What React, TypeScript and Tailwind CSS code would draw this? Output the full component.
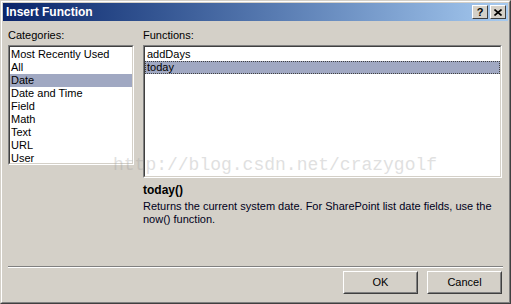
import React from "react";

const font = { fontFamily: '"Liberation Sans", Tahoma, sans-serif' };

function Sunken({ className, children }: { className?: string; children?: React.ReactNode }) {
  return (
    <div className={"border border-t-[#808080] border-l-[#808080] border-r-white border-b-white " + (className ?? "")}>
      <div className="h-full border border-t-[#404040] border-l-[#404040] border-r-[#d4d0c8] border-b-[#d4d0c8] bg-white pt-px">
        {children}
      </div>
    </div>
  );
}

function Btn({ label }: { label: string }) {
  return (
    <div className="w-[75px] h-[23px] border border-t-white border-l-white border-r-[#404040] border-b-[#404040]">
      <div className="h-full border border-t-[#d4d0c8] border-l-[#d4d0c8] border-r-[#808080] border-b-[#808080] flex items-center justify-center text-[11px] text-black">
        {label}
      </div>
    </div>
  );
}

function TitleBtn({ children }: { children: React.ReactNode }) {
  return (
    <div className="w-[16px] h-[14px] bg-[#d4d0c8] border border-t-white border-l-white border-r-[#404040] border-b-[#404040] flex items-center justify-center">
      {children}
    </div>
  );
}

export default function App() {
  const cats = ["Most Recently Used", "All", "Date", "Date and Time", "Field", "Math", "Text", "URL", "User"];
  const funcs = ["addDays", "today"];
  return (
    <div style={font} className="w-[511px] h-[304px] bg-[#d4d0c8] border border-t-[#d4d0c8] border-l-[#d4d0c8] border-r-[#404040] border-b-[#404040] relative overflow-hidden">
      <div className="h-full border border-t-white border-l-white border-r-[#808080] border-b-[#808080] p-px flex flex-col">
        <div className="h-[18px] flex items-center justify-between pl-[3px] pr-[2px] bg-gradient-to-r from-[#0a246a] to-[#a6caf0]">
          <span className="text-white font-bold text-[12px] leading-none">Insert Function</span>
          <div className="flex gap-[2px]">
            <TitleBtn>
              <span className="text-black font-bold text-[11px] leading-none">?</span>
            </TitleBtn>
            <TitleBtn>
              <svg width="8" height="7" viewBox="0 0 8 7">
                <path d="M0.5 0.5 L7.5 6.5 M7.5 0.5 L0.5 6.5" stroke="#000" strokeWidth="1.6" />
              </svg>
            </TitleBtn>
          </div>
        </div>
        <div className="flex gap-[9px] pl-[5px] pr-[6px] pt-[8px] text-[11px] text-black">
          <div className="w-[126px] flex flex-col">
            <div className="h-[16px] leading-[13px]">Categories:</div>
            <Sunken className="h-[120px]">
              {cats.map((c) => (
                <div key={c} className={"h-[13px] leading-[13px] pl-[1px] " + (c === "Date" ? "bg-[#a0a8c2]" : "")}>
                  {c}
                </div>
              ))}
            </Sunken>
          </div>
          <div className="flex-1 flex flex-col">
            <div className="h-[16px] leading-[13px]">Functions:</div>
            <Sunken className="h-[133px]">
              {funcs.map((f) => (
                <div
                  key={f}
                  className={
                    "h-[13px] leading-[11px] pl-[1px] " +
                    (f === "today" ? "bg-[#a0a8c2] border border-dotted border-[#404040]" : "border border-transparent")
                  }
                >
                  {f}
                </div>
              ))}
            </Sunken>
            <div className="mt-[5px] font-bold text-[12px] leading-[14px]">today()</div>
            <div className="mt-[3px] leading-[13px] text-[#000020]">
              Returns the current system date. For SharePoint list date fields, use the now() function.
            </div>
          </div>
        </div>
        <div className="flex-1" />
        <div className="mx-[5px] border-t border-t-[#808080] border-b border-b-white" />
        <div className="flex justify-end gap-[9px] pr-[6px] pt-[3px] pb-[7px]">
          <Btn label="OK" />
          <Btn label="Cancel" />
        </div>
      </div>
      <div
        className="absolute left-[112px] top-[153px] text-[18px] leading-[22px] text-[#9a9a9a] opacity-30 pointer-events-none whitespace-nowrap"
        style={{ fontFamily: '"Liberation Mono", "DejaVu Serif", monospace' }}
      >
        http://blog.csdn.net/crazygolf
      </div>
    </div>
  );
}
